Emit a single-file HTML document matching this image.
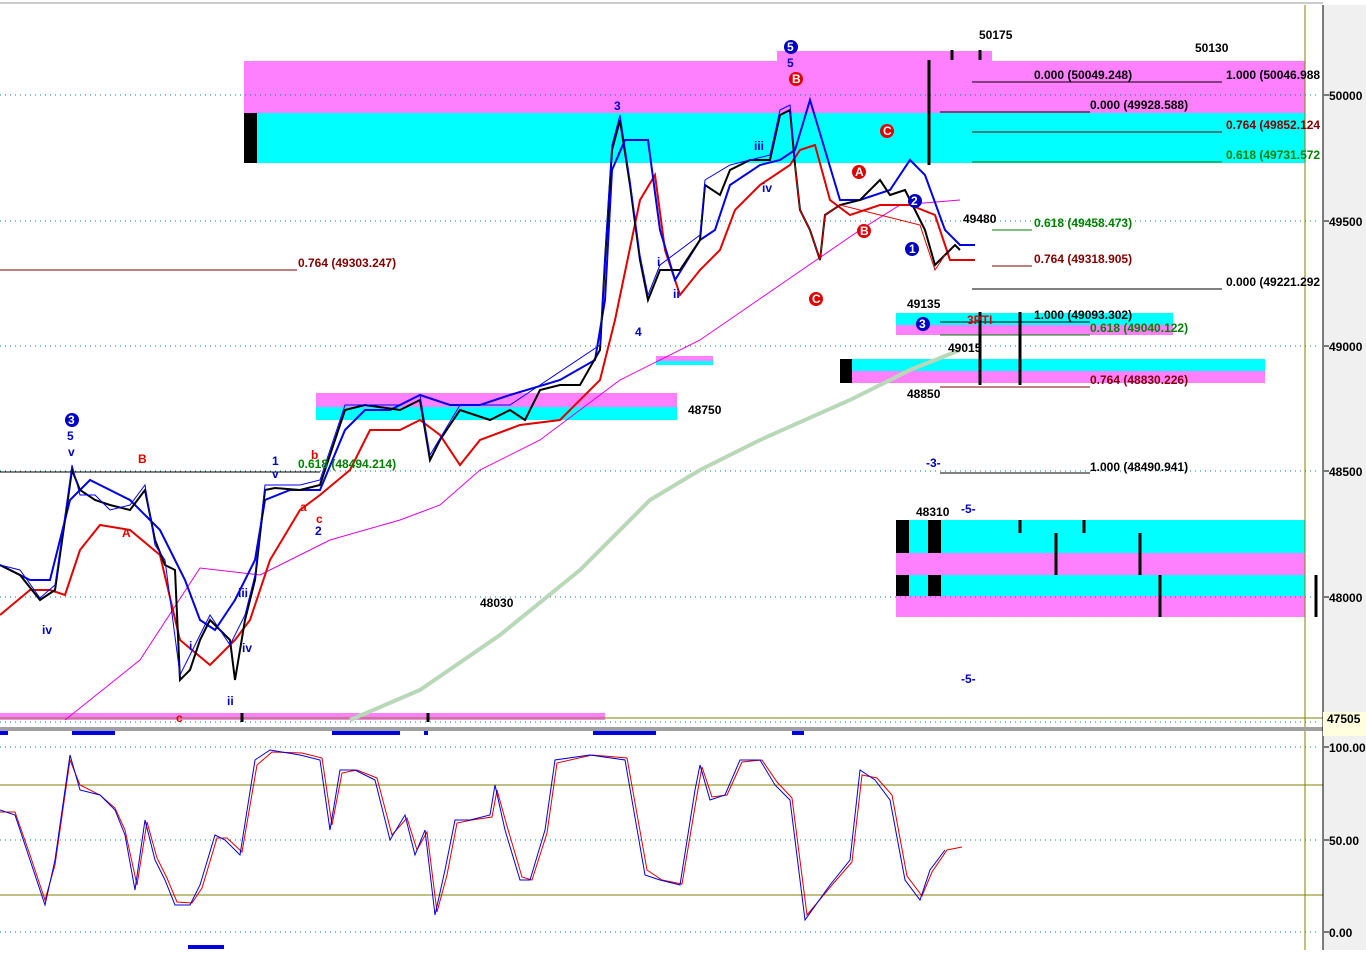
<!DOCTYPE html>
<html><head><meta charset="utf-8"><style>
body{margin:0;width:1366px;height:950px;overflow:hidden;background:#fff}
svg text{font-family:"Liberation Sans",sans-serif;font-size:12px;font-weight:bold}
</style></head><body>
<svg width="1366" height="950" xmlns="http://www.w3.org/2000/svg">
<rect width="1366" height="950" fill="#fff"/>
<line x1="0" y1="3" x2="1323" y2="3" stroke="#999"/>
<rect x="244" y="61" width="1061" height="52" fill="#ff80ff"/>
<rect x="777" y="51" width="215" height="10" fill="#ff80ff"/>
<rect x="244" y="113" width="1061" height="50" fill="#00ffff"/>
<rect x="244" y="113" width="13" height="50" fill="#000"/>
<rect x="316" y="393" width="361" height="14" fill="#ff80ff"/>
<rect x="316" y="407" width="361" height="13" fill="#00ffff"/>
<rect x="656" y="356" width="57" height="5" fill="#ff80ff"/>
<rect x="656" y="361" width="57" height="4" fill="#00ffff"/>
<rect x="896" y="313" width="277" height="12" fill="#00ffff"/>
<rect x="896" y="325" width="277" height="10" fill="#ff80ff"/>
<rect x="840" y="359" width="425" height="12" fill="#00ffff"/>
<rect x="840" y="371" width="425" height="12" fill="#ff80ff"/>
<rect x="840" y="359" width="12" height="24" fill="#000"/>
<rect x="896" y="520" width="409" height="33" fill="#00ffff"/>
<rect x="896" y="553" width="409" height="22" fill="#ff80ff"/>
<rect x="896" y="575" width="409" height="21" fill="#00ffff"/>
<rect x="896" y="596" width="409" height="21" fill="#ff80ff"/>
<rect x="896" y="520" width="13" height="33" fill="#000"/>
<rect x="928" y="520" width="13" height="33" fill="#000"/>
<rect x="896" y="575" width="13" height="21" fill="#000"/>
<rect x="928" y="575" width="13" height="21" fill="#000"/>
<rect x="0" y="713" width="605" height="7" fill="#ff80ff"/>
<g stroke="#008080" stroke-dasharray="1,4">
<line x1="0" y1="95" x2="1320" y2="95"/><line x1="0" y1="221" x2="1320" y2="221"/><line x1="0" y1="346" x2="1320" y2="346"/><line x1="0" y1="471" x2="1320" y2="471"/><line x1="0" y1="597" x2="1320" y2="597"/><line x1="0" y1="722" x2="1320" y2="722"/>
<line x1="0" y1="747" x2="1320" y2="747"/><line x1="0" y1="840" x2="1320" y2="840"/><line x1="0" y1="932" x2="1320" y2="932"/>
</g>
<g stroke="#808000"><line x1="1305" y1="5" x2="1305" y2="950"/><line x1="0" y1="718" x2="1323" y2="718"/><line x1="0" y1="785" x2="1323" y2="785"/><line x1="0" y1="895" x2="1323" y2="895"/></g>
<g stroke-width="1">
<line x1="0" y1="472" x2="320" y2="472" stroke="#000"/>
<line x1="0" y1="270" x2="297" y2="270" stroke="#800000"/>
<line x1="972" y1="82" x2="1222" y2="82" stroke="#000"/>
<line x1="940" y1="112" x2="1090" y2="112" stroke="#000"/>
<line x1="972" y1="132" x2="1222" y2="132" stroke="#800000"/>
<line x1="972" y1="162" x2="1222" y2="162" stroke="#008000"/>
<line x1="992" y1="230" x2="1032" y2="230" stroke="#008000"/>
<line x1="992" y1="266" x2="1032" y2="266" stroke="#800000"/>
<line x1="972" y1="289" x2="1222" y2="289" stroke="#000"/>
<line x1="940" y1="322" x2="1090" y2="322" stroke="#000"/>
<line x1="940" y1="335" x2="1090" y2="335" stroke="#008000"/>
<line x1="940" y1="387" x2="1090" y2="387" stroke="#800000"/>
<line x1="940" y1="473" x2="1090" y2="473" stroke="#000"/>
</g>
<polyline fill="none" stroke="#b8d8b8" stroke-width="4" points="350,720 420,690 500,635 580,570 650,500 700,470 760,440 850,400 910,370 960,350"/>
<polyline fill="none" stroke="#e000e0" stroke-width="1" points="65,720 140,660 200,568 260,575 330,540 400,520 440,505 480,470 540,440 620,380 700,340 780,285 860,230 900,205 960,200"/>
<polyline fill="none" stroke="#e00000" stroke-width="2" points="0,615 30,590 50,590 65,595 80,550 100,525 130,530 160,555 180,640 210,665 235,640 250,620 270,560 300,510 320,495 350,470 370,430 400,430 420,420 440,435 460,465 480,440 520,425 560,420 600,380 615,320 640,200 655,175 665,250 680,295 700,270 720,250 735,210 760,185 790,165 800,150 815,145 830,200 850,215 880,205 910,205 935,215 950,260 975,260"/>
<polyline fill="none" stroke="#0000e0" stroke-width="2" points="0,565 30,580 50,580 70,500 90,480 130,500 160,530 185,580 200,620 215,630 235,600 255,560 265,500 290,490 320,490 345,430 365,410 390,410 420,395 450,405 480,405 510,395 560,380 595,360 605,300 612,170 625,140 648,140 660,230 675,280 700,240 715,230 730,185 760,165 780,160 795,150 810,100 825,150 840,200 860,200 890,190 910,160 925,175 945,230 960,245 975,245"/>
<polyline fill="none" stroke="#000" stroke-width="2" points="0,565 20,575 40,600 55,590 65,520 72,470 80,490 95,500 110,505 130,510 145,490 155,540 165,565 175,570 180,680 190,670 200,640 210,620 220,630 230,640 235,680 245,620 255,580 265,490 275,488 300,490 320,485 335,440 345,410 365,405 400,410 420,400 430,460 440,440 460,410 490,420 510,410 525,420 540,390 560,385 580,385 600,350 605,260 612,150 620,120 630,185 640,260 648,300 660,270 680,270 700,240 705,185 720,195 730,170 750,160 770,160 780,115 790,110 795,165 800,210 810,230 820,260 825,215 840,205 860,200 880,180 890,195 905,190 915,210 925,230 935,265 945,255 955,245 960,250"/>
<polyline fill="none" stroke="#0000ff" stroke-width="1" points="0,565 20,570 40,598 55,585 65,515 72,465 80,495 95,495 110,510 130,505 145,485 155,545 165,560 180,675 200,635 210,615 230,645 245,615 255,575 265,485 300,485 320,480 335,435 345,405 400,405 420,395 430,455 460,405 510,405 540,385 600,345 605,255 612,145 620,115 630,180 640,255 648,295 660,265 700,235 705,180 730,165 770,155 780,110 790,105 795,160"/>
<polyline fill="none" stroke="#e00000" stroke-width="1" points="795,165 800,210 810,230 820,260 825,215 840,205 920,225 935,270 945,255"/>
<g stroke="#000" stroke-width="3"><line x1="929" y1="60" x2="929" y2="165"/><line x1="952" y1="50" x2="952" y2="60"/><line x1="980" y1="50" x2="980" y2="60"/><line x1="980" y1="312" x2="980" y2="385"/><line x1="1020" y1="312" x2="1020" y2="385"/><line x1="1020" y1="520" x2="1020" y2="533"/><line x1="1056" y1="533" x2="1056" y2="575"/><line x1="1084" y1="520" x2="1084" y2="533"/><line x1="1140" y1="533" x2="1140" y2="575"/><line x1="1160" y1="575" x2="1160" y2="617"/><line x1="1316" y1="575" x2="1316" y2="617"/><line x1="428" y1="713" x2="428" y2="722"/><line x1="242" y1="713" x2="242" y2="722"/></g>
<g fill="#000">
<text x="979" y="39">50175</text><text x="1195" y="52">50130</text>
<text x="1034" y="79">0.000 (50049.248)</text><text x="1226" y="79">1.000 (50046.988</text>
<text x="1090" y="109">0.000 (49928.588)</text>
<text x="963" y="223">49480</text><text x="907" y="308">49135</text><text x="948" y="352">49015</text><text x="907" y="398">48850</text>
<text x="1226" y="286">0.000 (49221.292</text><text x="1034" y="319">1.000 (49093.302)</text>
<text x="1090" y="471">1.000 (48490.941)</text>
<text x="688" y="414">48750</text><text x="480" y="607">48030</text><text x="916" y="516">48310</text>
</g>
<g fill="#800000"><text x="298" y="267">0.764 (49303.247)</text><text x="1226" y="129">0.764 (49852.124</text><text x="1034" y="263">0.764 (49318.905)</text><text x="1090" y="384">0.764 (48830.226)</text></g>
<g fill="#008000"><text x="1226" y="159">0.618 (49731.572</text><text x="1034" y="227">0.618 (49458.473)</text><text x="1090" y="332">0.618 (49040.122)</text><text x="298" y="468">0.618 (48494.214)</text></g>
<g fill="#0000c0" font-size="12"><text x="614" y="110">3</text><text x="754" y="150">iii</text><text x="762" y="192">iv</text><text x="635" y="336">4</text><text x="657" y="266">i</text><text x="673" y="298">ii</text><text x="67" y="440">5</text><text x="68" y="456">v</text><text x="42" y="634">iv</text><text x="272" y="465">1</text><text x="272" y="478">v</text><text x="315" y="535">2</text><text x="238" y="597">iii</text><text x="242" y="652">iv</text><text x="227" y="705">ii</text><text x="189" y="650">i</text><text x="787" y="67">5</text><text x="926" y="467">-3-</text><text x="961" y="513">-5-</text><text x="961" y="683">-5-</text></g>
<g fill="#e00000"><text x="138" y="463">B</text><text x="122" y="537">A</text><text x="311" y="459">b</text><text x="300" y="511">a</text><text x="316" y="523">c</text><text x="176" y="722">c</text><text x="967" y="324">3PTI</text></g>
<g font-size="11">
<circle cx="72" cy="420" r="7" fill="#0000c0"/><text x="68" y="424" fill="#fff">3</text>
<circle cx="791" cy="47" r="7" fill="#0000c0"/><text x="787" y="51" fill="#fff">5</text>
<circle cx="923" cy="324" r="7" fill="#0000c0"/><text x="919" y="328" fill="#fff">3</text>
<circle cx="912" cy="249" r="7" fill="#0000c0"/><text x="909" y="253" fill="#fff">1</text>
<circle cx="915" cy="201" r="7" fill="#0000c0"/><text x="911" y="205" fill="#fff">2</text>
<circle cx="887" cy="131" r="7" fill="#e00000"/><text x="883" y="135" fill="#fff">C</text>
<circle cx="859" cy="172" r="7" fill="#e00000"/><text x="855" y="176" fill="#fff">A</text>
<circle cx="864" cy="231" r="7" fill="#e00000"/><text x="860" y="235" fill="#fff">B</text>
<circle cx="816" cy="299" r="7" fill="#e00000"/><text x="812" y="303" fill="#fff">C</text>
<circle cx="796" cy="79" r="7" fill="#e00000"/><text x="792" y="83" fill="#fff">B</text>
</g>
<rect x="0" y="727" width="1366" height="4" fill="#a0a0a0"/>
<g fill="#0000e0"><rect x="0" y="731" width="8" height="4"/><rect x="72" y="731" width="43" height="4"/><rect x="332" y="731" width="68" height="4"/><rect x="424" y="731" width="4" height="4"/><rect x="593" y="731" width="63" height="4"/><rect x="792" y="731" width="12" height="4"/><rect x="188" y="945" width="36" height="4"/></g>
<polyline fill="none" stroke="#e00000" stroke-width="1" points="0,812 15,812 30,855 45,900 55,865 70,760 80,785 100,795 115,808 125,830 137,885 147,822 157,858 167,878 177,902 192,903 202,888 217,838 227,838 242,852 257,765 272,752 302,753 322,758 332,825 342,773 357,770 377,778 392,835 407,818 417,850 427,832 437,912 447,875 457,823 472,820 492,817 497,790 507,826 522,877 532,880 547,833 557,763 592,755 627,758 647,870 662,880 682,884 697,795 702,767 712,797 727,795 742,762 762,760 777,782 792,798 807,915 832,885 852,862 862,775 877,778 892,795 907,876 922,896 932,872 947,850 962,847"/>
<polyline fill="none" stroke="#0000e0" stroke-width="1" points="0,810 15,815 30,860 45,905 55,860 70,755 80,790 100,795 115,810 125,835 135,890 145,820 155,860 165,880 175,905 190,905 200,885 215,835 225,840 240,855 255,760 270,750 300,755 320,760 330,830 340,770 355,770 375,780 390,840 405,815 415,855 425,830 435,915 445,870 455,820 470,820 490,815 495,785 505,830 520,880 530,880 545,830 555,760 590,755 625,760 645,875 660,880 680,885 695,790 700,765 710,800 725,795 740,760 760,760 775,785 790,800 805,920 830,885 850,860 860,770 875,780 890,800 905,880 920,900 930,870 945,850"/>
<rect x="1323" y="5" width="43" height="945" fill="#f0f0f0"/>
<line x1="1323" y1="5" x2="1323" y2="950" stroke="#000"/>
<rect x="1323" y="712" width="43" height="24" fill="#ffffe0"/>
<g stroke="#000"><line x1="1324" y1="95" x2="1329" y2="95"/><line x1="1324" y1="221" x2="1329" y2="221"/><line x1="1324" y1="346" x2="1329" y2="346"/><line x1="1324" y1="471" x2="1329" y2="471"/><line x1="1324" y1="597" x2="1329" y2="597"/><line x1="1324" y1="747" x2="1329" y2="747"/><line x1="1324" y1="840" x2="1329" y2="840"/><line x1="1324" y1="932" x2="1329" y2="932"/></g>
<g fill="#000"><text x="1329" y="100">50000</text><text x="1329" y="226">49500</text><text x="1329" y="351">49000</text><text x="1329" y="476">48500</text><text x="1329" y="602">48000</text><text x="1327" y="723">47505</text><text x="1329" y="752">100.00</text><text x="1329" y="845">50.00</text><text x="1329" y="937">0.00</text></g>
</svg>
</body></html>
